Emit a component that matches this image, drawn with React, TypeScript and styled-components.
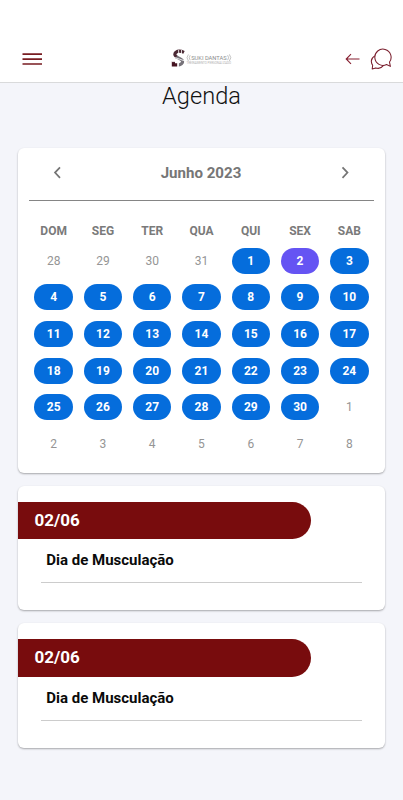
import React from "react";
import styled, { createGlobalStyle } from "styled-components";

const GlobalStyle = createGlobalStyle`
  * { box-sizing: border-box; }
  html, body { margin: 0; background: #f4f5fa; }
  body { font-family: Roboto, "Liberation Sans", sans-serif; }
`;

const Screen = styled.div`
  height: 800px;
  overflow: hidden;
  background: #f4f5fa;
`;

const Header = styled.header`
  height: 83px;
  padding: 36px 11px 0 21px;
  display: grid;
  grid-template-columns: 150px auto 1fr;
  align-items: center;
  background: #fff;
  border-bottom: 1px solid #d9dadb;
`;

const IconButton = styled.button`
  display: flex;
  padding: 0;
  border: 0;
  background: none;
`;

const Actions = styled.div`
  display: flex;
  justify-content: flex-end;
  align-items: center;
  gap: 10px;
`;

const Title = styled.h1`
  margin: 0;
  height: 65px;
  font-size: 23.6px;
  line-height: 27px;
  font-weight: 300;
  text-align: center;
  color: #111;
`;

const Card = styled.section`
  margin: 0 18px 13px;
  background: #fff;
  border-radius: 6px;
  box-shadow: 0 1px 2px rgba(0, 0, 0, 0.32);
`;

const CalendarCard = styled(Card)`
  height: 324.5px;
  padding: 0 11px;
`;

const MonthBar = styled.div`
  height: 53px;
  padding: 0 21px 3px 20px;
  display: flex;
  justify-content: space-between;
  align-items: center;
  border-bottom: 1.3px solid #858585;
`;

const Month = styled.span`
  font-size: 15.1px;
  line-height: 20px;
  font-weight: 700;
  color: #767676;
`;

const Week = styled.div`
  display: grid;
  grid-template-columns: repeat(7, 1fr);
  justify-items: center;
`;

const WeekHeader = styled(Week)`
  height: 41.5px;
  padding-top: 21.5px;
  font-size: 12px;
  line-height: 16px;
  font-weight: 700;
  color: #7a7a7a;
`;

const Day = styled.span<{ $kind: Kind }>`
  width: 38.5px;
  height: 26px;
  margin: 5.3px 0;
  border-radius: 13px;
  font-size: 12px;
  line-height: 26.5px;
  text-align: center;
  font-weight: ${(p) => (p.$kind === "outside" ? 400 : 700)};
  color: ${(p) => (p.$kind === "outside" ? "#959595" : "#fff")};
  background: ${(p) =>
    p.$kind === "outside" ? "transparent" : p.$kind === "today" ? "#6554f3" : "#056ddc"};
`;

const EventCard = styled(Card)`
  height: 124.5px;
  padding-top: 16px;
`;

const DateBand = styled.div`
  width: 293px;
  height: 37.5px;
  padding-left: 16.5px;
  border-radius: 0 19px 19px 0;
  background: #780c0d;
  color: #fff;
  font-size: 17px;
  line-height: 37px;
  font-weight: 700;
`;

const EventName = styled.div`
  height: 44px;
  margin: 0 23px;
  padding-left: 5.3px;
  border-bottom: 1px solid #ccc;
  font-size: 15px;
  line-height: 42px;
  font-weight: 700;
  color: #0a0a0a;
`;

type Kind = "outside" | "training" | "today";

const kindOf = (offset: number): Kind =>
  offset < 1 || offset > 30 ? "outside" : offset === 2 ? "today" : "training";

const labelOf = (offset: number) =>
  offset < 1 ? offset + 31 : offset > 30 ? offset - 30 : offset;

const days = Array.from({ length: 42 }, (_, i) => i - 3);
const weekdays = ["DOM", "SEG", "TER", "QUA", "QUI", "SEX", "SAB"];
const events = [
  { id: 1, date: "02/06", name: "Dia de Musculação" },
  { id: 2, date: "02/06", name: "Dia de Musculação" },
];

const MenuIcon = () => (
  <svg width="22" height="14" viewBox="0 0 22 14" stroke="#781d22" strokeWidth="1.7">
    <path d="M1.5 2.2H21M1.5 7.2H21M1.5 12H21" />
  </svg>
);

const Logo = () => (
  <svg width="62" height="20" viewBox="0 0 62 20">
    <g fill="none" strokeWidth="3.2">
      <path d="M13 3.4Q8 1 5 3.2Q2.4 5.6 5.8 8.3" stroke="#4b2834" />
      <path d="M5.4 7.8L9.2 9.8Q13.4 12 10.4 14.8Q9 16 7.6 15.8" stroke="#77737a" />
      <path d="M2.4 12.5V15.8H6.2" stroke="#461421" />
    </g>
    <path d="M1 7.5L14 12M1 12.6H7M7.6 1V6M7.4 13V18M10.5 1V5" stroke="#fff" strokeWidth=".8" />
    <g fill="none" stroke="#b4b4b4" strokeWidth=".8">
      <path d="M17.4 5.4Q14.6 8.6 17.4 12M19.2 6.2Q17.2 8.7 19.2 11.2M56.6 6.2Q58.6 8.7 56.6 11.2M58.4 5.4Q61.2 8.6 58.4 12" />
    </g>
    <text x="20.2" y="10.6" fontSize="5.8" fill="#8c8c8c" textLength="35.5" lengthAdjust="spacingAndGlyphs">SUKI DANTAS</text>
    <text x="15.5" y="15.3" fontSize="2.8" fill="#b0b0b0" textLength="44.5" lengthAdjust="spacingAndGlyphs">TREINAMENTO PERSONALIZADO</text>
  </svg>
);

const BackIcon = () => (
  <svg width="15" height="12" viewBox="0 0 15 12" fill="none" stroke="#861f30" strokeWidth="1.1">
    <path d="M14.5 6H1.5M6 1.2L1.2 6L6 10.8" />
  </svg>
);

const ChatIcon = () => (
  <svg width="22" height="22" viewBox="0 0 23 23" fill="none" stroke="#791d2c" strokeWidth="1.1" strokeLinejoin="round">
    <path d="M20.4 14.7L21.3 19.2L17.3 17.3A8.5 8.5 0 1 1 20.4 14.7Z" />
    <path d="M5 8.2Q1.2 10.5 1.4 14Q1.5 16.3 2.8 18L2.3 22L6 20.8Q10.8 22.5 14.2 18.2" />
  </svg>
);

const Chevron = ({ d }: { d: string }) => (
  <svg width="16" height="16" viewBox="0 0 16 16" fill="none" stroke="#747474" strokeWidth="1.7">
    <path d={d} />
  </svg>
);

export default function App() {
  return (
    <Screen>
      <GlobalStyle />
      <Header>
        <IconButton aria-label="Menu"><MenuIcon /></IconButton>
        <Logo />
        <Actions>
          <IconButton aria-label="Voltar"><BackIcon /></IconButton>
          <IconButton aria-label="Mensagens"><ChatIcon /></IconButton>
        </Actions>
      </Header>
      <Title>Agenda</Title>
      <CalendarCard>
        <MonthBar>
          <IconButton aria-label="Mês anterior"><Chevron d="M11 2.3L6 7.6L11 12.9" /></IconButton>
          <Month>Junho 2023</Month>
          <IconButton aria-label="Próximo mês"><Chevron d="M5.5 2.3L10.5 7.6L5.5 12.9" /></IconButton>
        </MonthBar>
        <WeekHeader>
          {weekdays.map((name) => <span key={name}>{name}</span>)}
        </WeekHeader>
        <Week>
          {days.map((day) => <Day key={day} $kind={kindOf(day)}>{labelOf(day)}</Day>)}
        </Week>
      </CalendarCard>
      {events.map((event) => (
        <EventCard key={event.id}>
          <DateBand>{event.date}</DateBand>
          <EventName>{event.name}</EventName>
        </EventCard>
      ))}
    </Screen>
  );
}
